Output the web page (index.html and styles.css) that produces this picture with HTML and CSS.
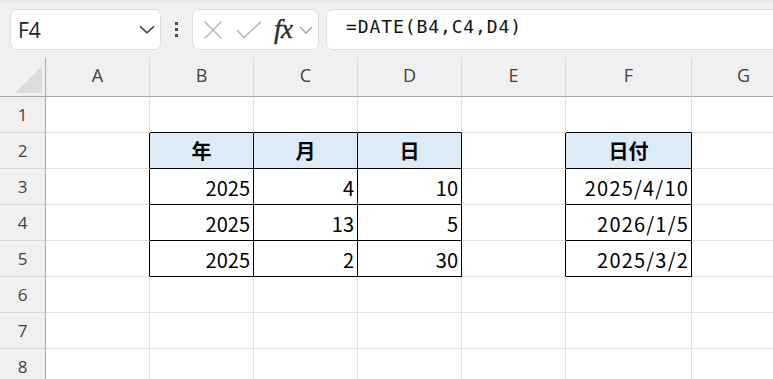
FILE: index.html
```html
<!DOCTYPE html>
<html lang="ja">
<head>
    <meta charset="UTF-8">
    <meta name="viewport" content="width=device-width, initial-scale=1.0">
    <title>DATE関数</title>
    <link rel="stylesheet" href="styles.css">
</head>
<body>
    <!-- Formula bar -->
    <div class="toolbar">
        <div class="name-box">
            <span>F4</span>
            <svg class="chev" width="16" height="9" viewBox="0 0 16 9"><path d="M1 1.2 L8 7.8 L15 1.2" fill="none" stroke="#333" stroke-width="1.5"/></svg>
        </div>
        <div class="more">
            <i></i><i></i><i></i>
        </div>
        <div class="fx-box">
            <svg width="20" height="20" viewBox="0 0 20 20"><path d="M1.5 1.5 L18.5 18.5 M18.5 1.5 L1.5 18.5" stroke="#b4b4b4" stroke-width="1.4"/></svg>
            <svg class="check" width="26" height="18" viewBox="0 0 26 18"><path d="M1 9 L8 16.5 L25 0.8" fill="none" stroke="#b4b4b4" stroke-width="1.4"/></svg>
            <span class="fx">fx</span>
            <svg class="chev-sm" width="14" height="8" viewBox="0 0 14 8"><path d="M1 1 L7 7 L13 1" fill="none" stroke="#9a9a9a" stroke-width="1.3"/></svg>
        </div>
        <div class="formula">=DATE(B4,C4,D4)</div>
    </div>

    <!-- Sheet grid -->
    <table class="sheet">
        <colgroup>
            <col class="w-head">
            <col class="w-std"><col class="w-std"><col class="w-std"><col class="w-std"><col class="w-std">
            <col class="w-wide">
            <col class="w-std">
        </colgroup>
        <tr class="col-head">
            <th class="corner"><div class="tri"></div></th>
            <th>A</th><th>B</th><th>C</th><th>D</th><th>E</th><th>F</th><th>G</th>
        </tr>
        <tr>
            <th class="row-head">1</th>
            <td></td><td class="bb"></td><td class="bb"></td><td class="bb"></td><td></td><td class="bb"></td><td></td>
        </tr>
        <tr>
            <th class="row-head">2</th>
            <td class="br"></td>
            <td class="box title">年</td><td class="box title">月</td><td class="box title">日</td>
            <td class="br"></td>
            <td class="box title">日付</td>
            <td></td>
        </tr>
        <tr>
            <th class="row-head">3</th>
            <td class="br"></td>
            <td class="box num">2025</td><td class="box num">4</td><td class="box num">10</td>
            <td class="br"></td>
            <td class="box num date">2025/4/10</td>
            <td></td>
        </tr>
        <tr>
            <th class="row-head">4</th>
            <td class="br"></td>
            <td class="box num">2025</td><td class="box num">13</td><td class="box num">5</td>
            <td class="br"></td>
            <td class="box num date">2026/1/5</td>
            <td></td>
        </tr>
        <tr>
            <th class="row-head">5</th>
            <td class="br"></td>
            <td class="box num">2025</td><td class="box num">2</td><td class="box num">30</td>
            <td class="br"></td>
            <td class="box num date">2025/3/2</td>
            <td></td>
        </tr>
        <tr>
            <th class="row-head">6</th>
            <td></td><td></td><td></td><td></td><td></td><td></td><td></td>
        </tr>
        <tr>
            <th class="row-head">7</th>
            <td></td><td></td><td></td><td></td><td></td><td></td><td></td>
        </tr>
        <tr>
            <th class="row-head">8</th>
            <td></td><td></td><td></td><td></td><td></td><td></td><td></td>
        </tr>
    </table>
</body>
</html>
```

FILE: styles.css
```css
body {
    margin: 0;
    padding: 0;
    width: 773px;
    height: 379px;
    overflow: hidden;
    background-color: #fff;
    font-family: "Open Sans", "Noto Sans", sans-serif;
}

/* Formula bar */
.toolbar {
    display: flex;
    align-items: flex-start;
    box-sizing: border-box;
    height: 58px;
    padding: 6px 0 0 10px;
    background-color: #f0f0f0;
    border-top: 3px solid #e9e9e9;
}

.name-box {
    display: flex;
    align-items: center;
    justify-content: space-between;
    box-sizing: border-box;
    width: 151px;
    height: 41px;
    padding: 0 5px 0 7px;
    background-color: #fff;
    border: 1px solid #dedede;
    border-radius: 7px;
    font-size: 21px;
    color: #222;
}

.name-box span {
    margin-top: 1px;
}

.more {
    display: flex;
    flex-direction: column;
    align-items: center;
    justify-content: center;
    gap: 2.5px;
    width: 31px;
    height: 41px;
}

.more i {
    display: block;
    width: 3.5px;
    height: 3.5px;
    background-color: #4a4a4a;
}

.fx-box {
    display: flex;
    align-items: center;
    box-sizing: border-box;
    width: 127px;
    height: 41px;
    padding-left: 10px;
    background-color: #fff;
    border: 1px solid #dedede;
    border-radius: 7px;
}

.fx-box .check {
    margin-left: 13px;
}

.fx {
    margin-left: 12px;
    font-family: "Liberation Serif", serif;
    font-style: italic;
    font-size: 27px;
    color: #2b2b2b;
    letter-spacing: -0.5px;
    -webkit-text-stroke: 0.4px #2b2b2b;
}

.chev-sm {
    margin-left: 6px;
    margin-top: 1px;
}

.formula {
    flex: 1;
    box-sizing: border-box;
    height: 41px;
    margin-left: 7px;
    margin-right: -20px;
    padding: 6px 0 0 19px;
    background-color: #fff;
    border: 1px solid #dedede;
    border-radius: 7px;
    font-family: "DejaVu Sans Mono", monospace;
    font-size: 18px;
    letter-spacing: 0.9px;
    color: #111;
}

/* Sheet grid */
.sheet {
    table-layout: fixed;
    border-collapse: separate;
    border-spacing: 0;
    width: 796px;
}

.w-head { width: 46px; }
.w-std { width: 104px; }
.w-wide { width: 126px; }

.sheet td,
.sheet th {
    box-sizing: border-box;
    height: 36px;
    padding: 0;
    border-right: 1px solid #e1e1e1;
    border-bottom: 1px solid #e1e1e1;
}

.col-head th {
    height: 39px;
    background-color: #f0f0f0;
    border-right-color: #dadada;
    border-bottom: 1px solid #a9a9a9;
    font-weight: normal;
    font-size: 18px;
    color: #424242;
    padding-bottom: 5px;
}

.col-head th.corner {
    position: relative;
    border-right: 1px solid #a9a9a9;
}

.tri {
    position: absolute;
    left: 15px;
    bottom: 3px;
    width: 0;
    height: 0;
    border-left: 27px solid transparent;
    border-bottom: 27px solid #dcdcdc;
}

.sheet th.row-head {
    background-color: #f0f0f0;
    border-right: 1px solid #a9a9a9;
    border-bottom-color: #d6d6d6;
    font-weight: normal;
    font-size: 17px;
    color: #424242;
}

.sheet td.bb {
    border-bottom-color: #000;
}

.sheet td.br {
    border-right-color: #000;
}

.sheet td.box {
    border-right-color: #000;
    border-bottom-color: #000;
    font-family: "Noto Sans CJK JP", sans-serif;
    font-size: 20px;
    color: #000;
}

.title {
    background-color: #ddebf7;
    text-align: center;
    font-weight: bold;
}

.num {
    text-align: right;
    padding-right: 3px !important;
    padding-top: 1px !important;
}

.date {
    letter-spacing: 1.2px;
    padding-right: 2px !important;
}
```
